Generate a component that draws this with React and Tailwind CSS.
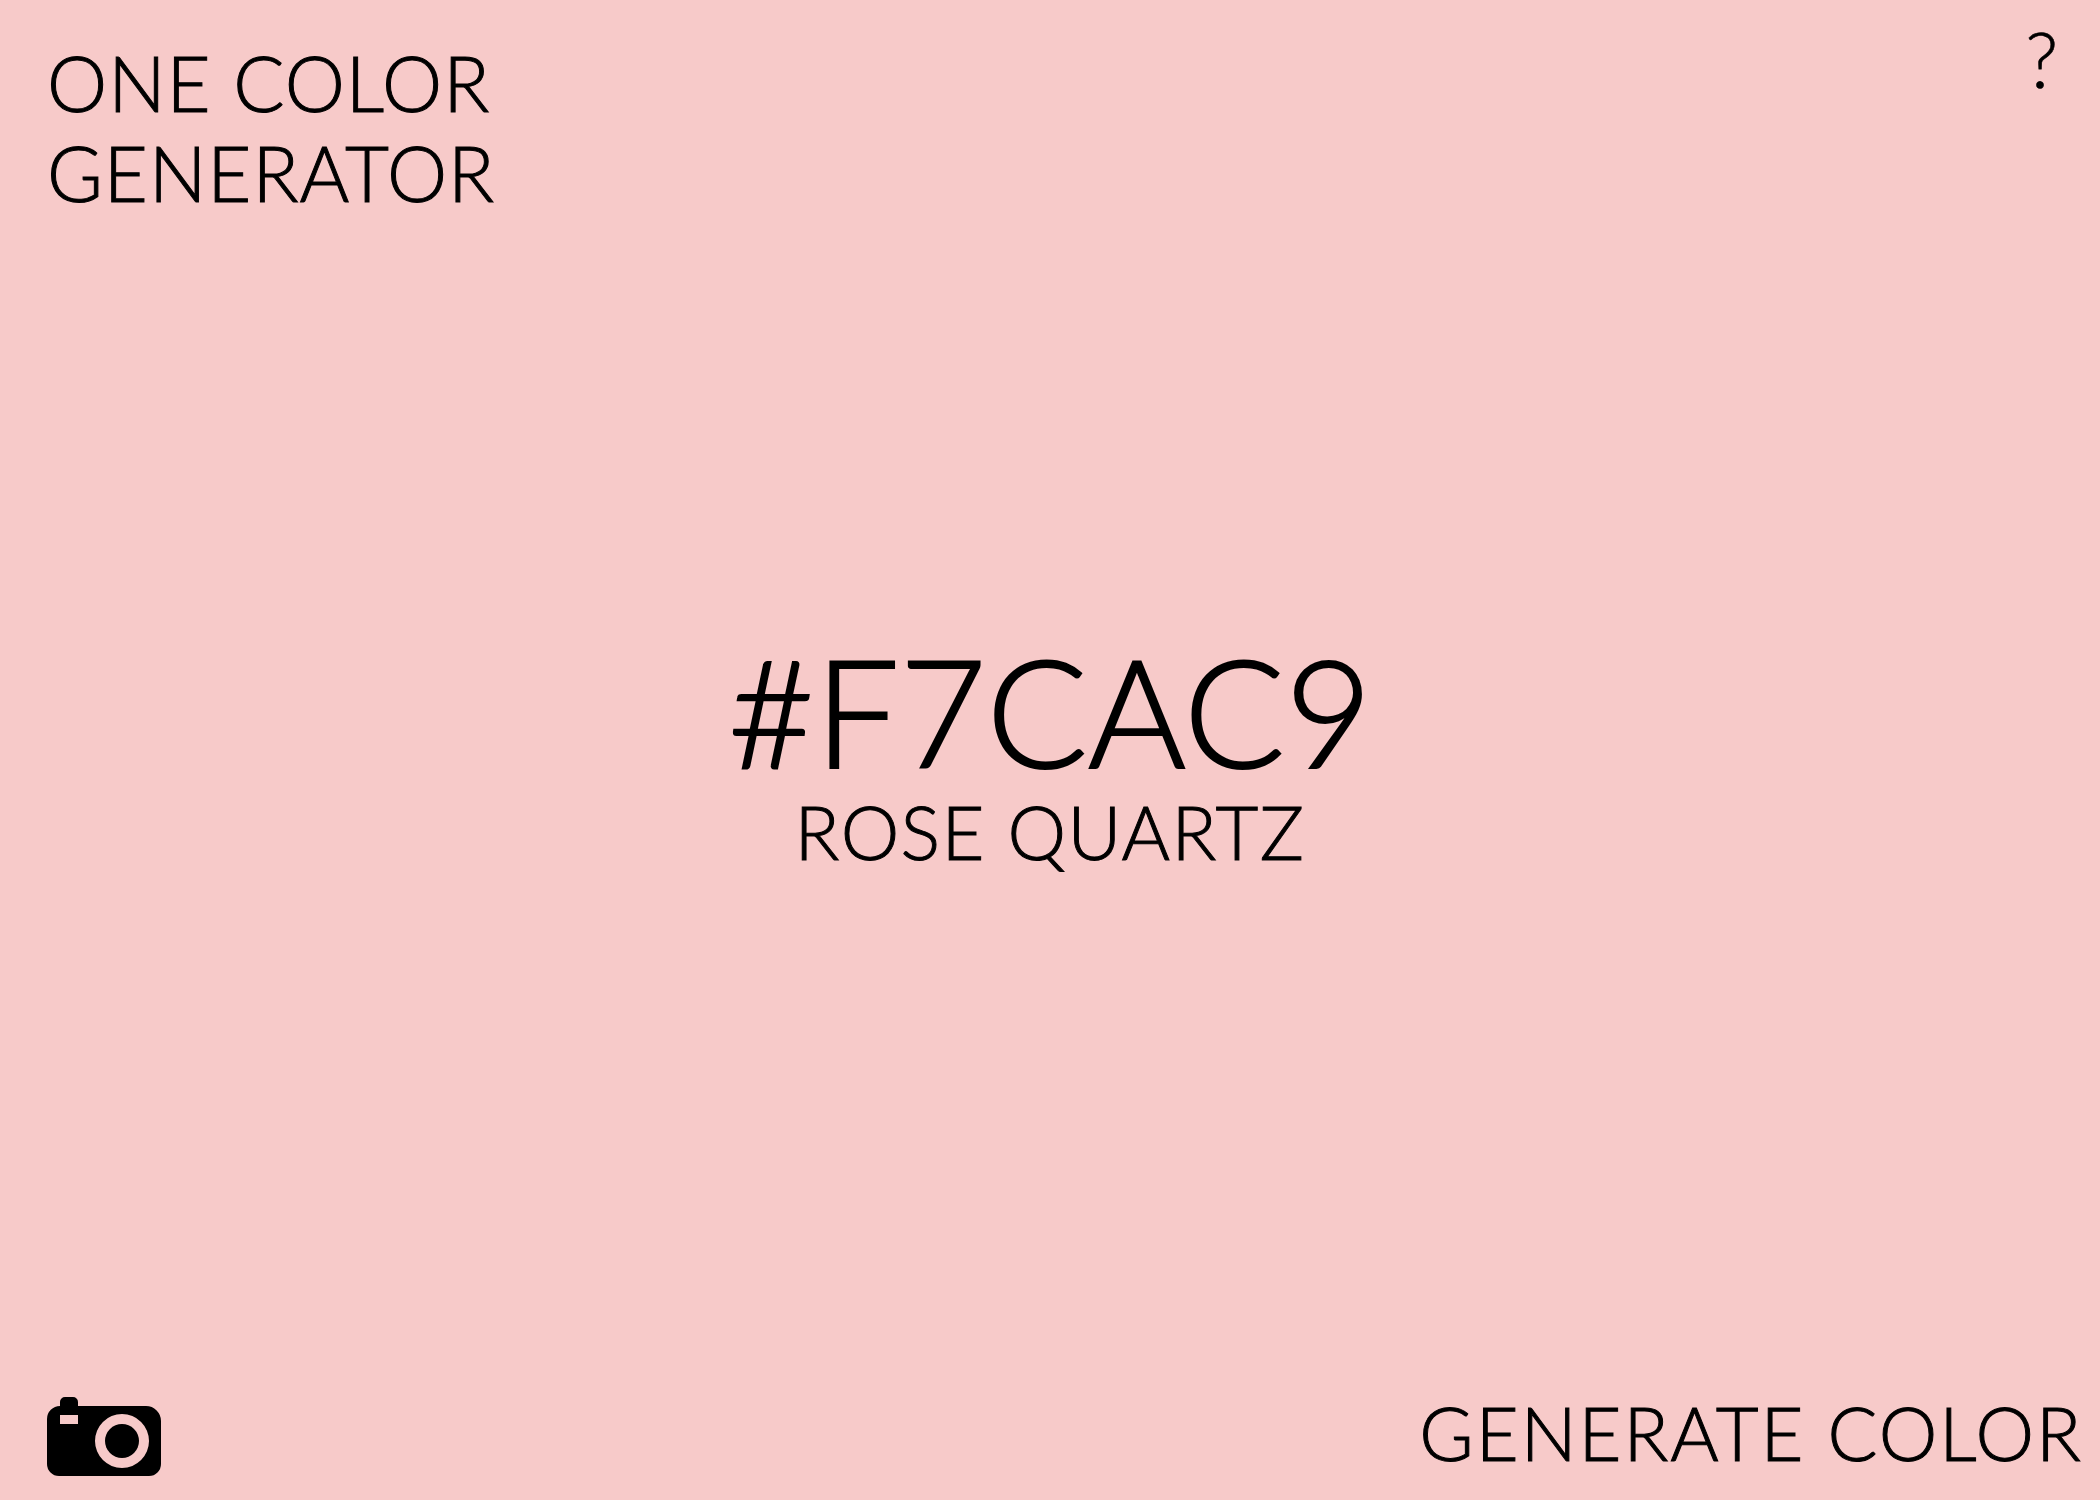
import React from 'react';

function CameraIcon() {
  return (
    <svg width="114" height="79" viewBox="0 0 114 79" className="block">
      <path
        fillRule="evenodd"
        fill="#000"
        d="M13 9V5a5 5 0 0 1 5-5h8a5 5 0 0 1 5 5v4h68a15 15 0 0 1 15 15v43a12 12 0 0 1-12 12H12A12 12 0 0 1 0 67V22A13 13 0 0 1 13 9ZM13 18v9h18v-9ZM75 17a27 27 0 1 0 0 54a27 27 0 1 0 0-54Z"
      />
      <circle cx="75" cy="44" r="17" fill="#000" />
    </svg>
  );
}

export default function App() {
  return (
    <div className="h-[1500px] bg-[#F7CAC9] text-black flex flex-col font-['Lato','Liberation_Sans',sans-serif] font-light">
      <header className="flex justify-between items-start pl-[47px] pr-[42px] pt-[38px]">
        <h1 className="text-[76px] leading-[90px] font-light tracking-[1px] [-webkit-text-stroke:1px_#000]">
          ONE COLOR
          <br />
          GENERATOR
        </h1>
        <button className="text-[76px] leading-[42px] font-light [-webkit-text-stroke:0.6px_#000]">?</button>
      </header>

      <main className="flex-1 flex flex-col items-center justify-center pb-[108px]">
        <div className="text-[150px] leading-[164px] font-light [-webkit-text-stroke:2px_#000]">#F7CAC9</div>
        <div className="text-[74px] leading-[80px] font-light tracking-[1.4px] [-webkit-text-stroke:1px_#000]">ROSE QUARTZ</div>
      </main>

      <footer className="flex justify-between items-end pl-[47px] pr-[17px] pb-[24px]">
        <CameraIcon />
        <button className="text-[74px] leading-[86px] font-light tracking-[2px] [-webkit-text-stroke:1px_#000]">GENERATE COLOR</button>
      </footer>
    </div>
  );
}
